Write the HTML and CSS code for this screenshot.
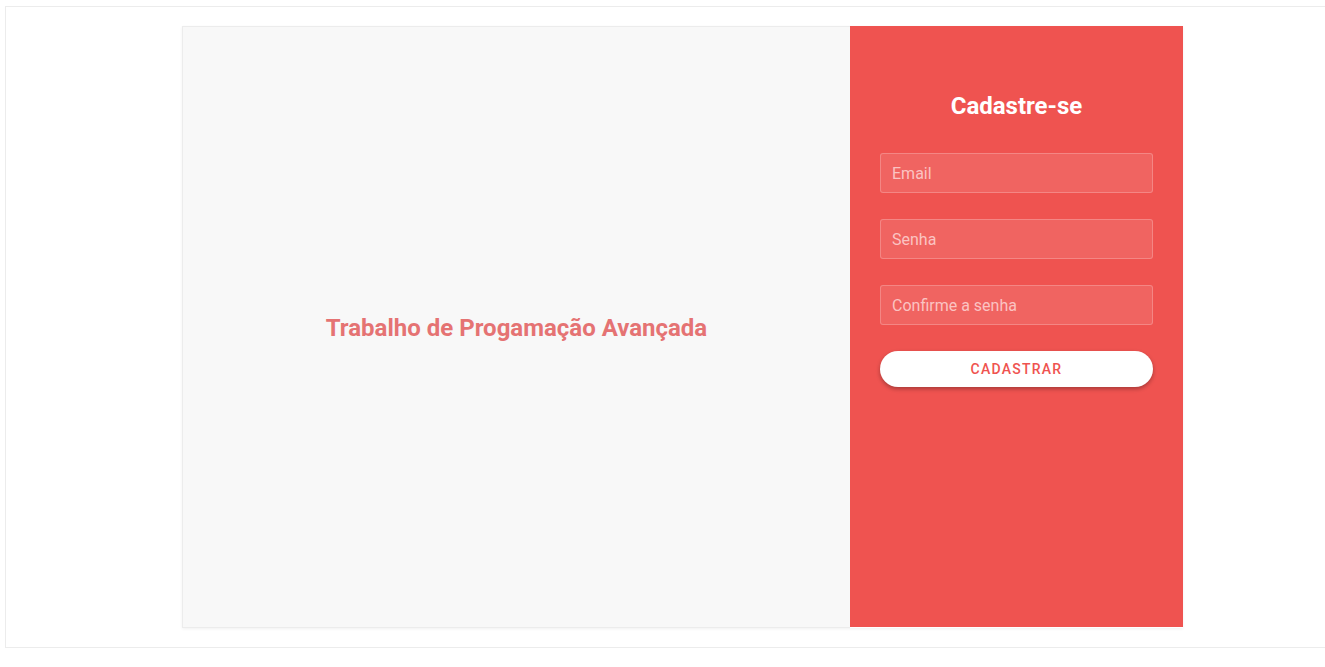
FILE: index.html
```html
<!DOCTYPE html>
<html lang="pt">
<head>
<meta charset="utf-8">
<title>Cadastre-se</title>
<link rel="stylesheet" href="styles.css">
</head>
<body>
<div class="frame">
  <div class="card">
    <section class="intro">
      <h1 class="intro-title">Trabalho de Progamação Avançada</h1>
    </section>
    <section class="signup">
      <h2 class="signup-title">Cadastre-se</h2>
      <form class="signup-form">
        <input class="field" type="email" placeholder="Email">
        <input class="field" type="password" placeholder="Senha">
        <input class="field" type="password" placeholder="Confirme a senha">
        <button class="submit" type="button">CADASTRAR</button>
      </form>
    </section>
  </div>
</div>
</body>
</html>
```
FILE: styles.css
```css
html, body {
  margin: 0;
  padding: 0;
  overflow: hidden;
  background: #ffffff;
  font-family: Roboto, "Liberation Sans", sans-serif;
}
.frame {
  margin: 6px 0 0 5px;
  width: 1330px;
  height: 642px;
  border: 1px solid #ececec;
  box-sizing: border-box;
  padding-top: 19px;
  padding-left: 176px;
}
.card {
  display: flex;
  width: 1001px;
  height: 602px;
  box-shadow: 0 1px 3px rgba(0,0,0,0.06);
}
.intro {
  width: 668px;
  background: #f8f8f8;
  border: 1px solid #ececec;
  border-right: none;
  box-sizing: border-box;
  display: flex;
  align-items: center;
  justify-content: center;
  padding-top: 2px;
}
.intro-title {
  margin: 0;
  font-size: 24px;
  font-weight: 700;
  color: #e57373;
}
.signup {
  width: 333px;
  height: 601px;
  background: #ef5350;
  box-sizing: border-box;
  padding: 0 30px;
}
.signup-title {
  margin: 66px 0 33px;
  font-size: 24px;
  line-height: 28px;
  font-weight: 700;
  color: #ffffff;
  text-align: center;
}
.signup-form {
  display: flex;
  flex-direction: column;
  gap: 26px;
}
.field {
  height: 40px;
  box-sizing: border-box;
  background: rgba(255,255,255,0.1);
  border: 1px solid rgba(255,255,255,0.22);
  border-radius: 3px;
  padding: 0 11px;
  font-family: Roboto, "Liberation Sans", sans-serif;
  font-size: 16px;
  color: #ffffff;
  outline: none;
}
.field::placeholder {
  color: #fbc3c2;
}
.submit {
  height: 36px;
  border: none;
  border-radius: 18px;
  background: #ffffff;
  color: #ef5350;
  font-family: Roboto, "Liberation Sans", sans-serif;
  font-size: 14px;
  font-weight: 500;
  letter-spacing: 1.25px;
  box-shadow: 0 2px 4px rgba(0,0,0,0.3);
  cursor: pointer;
}
```
